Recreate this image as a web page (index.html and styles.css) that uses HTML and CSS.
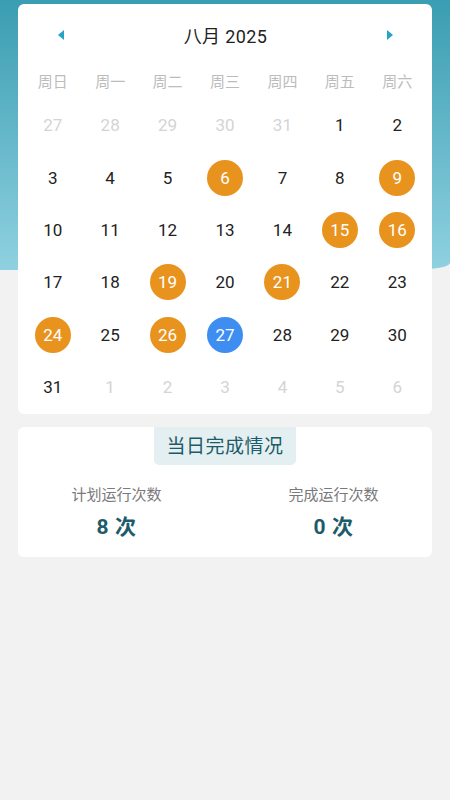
FILE: index.html
```html
<!DOCTYPE html>
<html>

<head>
    <title>运行日历</title>
    <link rel="stylesheet" href="styles.css">
</head>

<body>
    <div class="page-bg"></div>
    <div class="page">
        <div class="cal-card">
            <div class="cal-head">
                <span class="cal-arrow cal-prev"></span>
                <span class="cal-title">八月 2025</span>
                <span class="cal-arrow cal-next"></span>
            </div>
            <div class="cal-grid cal-week">
                <span>周日</span><span>周一</span><span>周二</span><span>周三</span><span>周四</span><span>周五</span><span>周六</span>
            </div>
            <div class="cal-grid cal-days">
                <span class="off">27</span><span class="off">28</span><span class="off">29</span><span class="off">30</span><span class="off">31</span><span>1</span><span>2</span>
                <span>3</span><span>4</span><span>5</span><span class="done">6</span><span>7</span><span>8</span><span class="done">9</span>
                <span>10</span><span>11</span><span>12</span><span>13</span><span>14</span><span class="done">15</span><span class="done">16</span>
                <span>17</span><span>18</span><span class="done">19</span><span>20</span><span class="done">21</span><span>22</span><span>23</span>
                <span class="done">24</span><span>25</span><span class="done">26</span><span class="today">27</span><span>28</span><span>29</span><span>30</span>
                <span>31</span><span class="off">1</span><span class="off">2</span><span class="off">3</span><span class="off">4</span><span class="off">5</span><span class="off">6</span>
            </div>
        </div>

        <div class="stat-card">
            <div class="stat-tag">当日完成情况</div>
            <div class="stat-row">
                <div class="stat-item">
                    <div class="stat-label">计划运行次数</div>
                    <div class="stat-value">8 次</div>
                </div>
                <div class="stat-item">
                    <div class="stat-label">完成运行次数</div>
                    <div class="stat-value">0 次</div>
                </div>
            </div>
        </div>
    </div>
</body>

</html>
```

FILE: styles.css
```css
html, body{
    margin: 0;
    padding: 0;
}
body{
    background-color: #f2f2f2;
    font-family: Roboto, "Noto Sans CJK SC", sans-serif;
    color: #222;
    position: relative;
    min-height: 800px;
}
.page-bg{
    position: absolute;
    left: 0;
    top: 0;
    width: 100%;
    height: 270px;
    background: linear-gradient(#3a9db1, #8fd1e1);
    border-bottom-right-radius: 40px 7px;
}
.page{
    position: relative;
    padding: 4px 18px;
}
.cal-card{
    background-color: #fff;
    border-radius: 6px;
    padding: 0 6px 1px 6px;
}
.cal-head{
    height: 62px;
    display: flex;
    align-items: center;
    justify-content: space-between;
    padding: 0 33px 2px 34px;
}
.cal-title{
    font-size: 18px;
    letter-spacing: 0.4px;
    color: #222;
}
.cal-arrow{
    width: 0;
    height: 0;
    border-top: 5px solid transparent;
    border-bottom: 5px solid transparent;
}
.cal-prev{
    border-right: 6px solid #25a3c9;
}
.cal-next{
    border-left: 6px solid #25a3c9;
}
.cal-grid{
    display: grid;
    grid-template-columns: repeat(7, 1fr);
    text-align: center;
}
.cal-week{
    height: 29px;
    line-height: 29px;
    font-size: 15px;
    color: #bcbcbc;
    margin-bottom: 2px;
}
.cal-days{
    grid-auto-rows: 52.4px;
}
.cal-days span{
    display: flex;
    align-items: center;
    justify-content: center;
    font-size: 17px;
    color: #222;
}
.cal-days span.off{
    color: #d4d4d4;
}
.cal-days span.done,
.cal-days span.today{
    width: 36px;
    height: 36px;
    border-radius: 50%;
    color: #fff;
    justify-self: center;
    align-self: center;
}
.cal-days span.done{
    background-color: #e9931f;
}
.cal-days span.today{
    background-color: #3d8ef0;
}
.stat-card{
    margin-top: 13px;
    background-color: #fff;
    border-radius: 6px;
    height: 130px;
    display: flex;
    flex-direction: column;
    align-items: center;
}
.stat-tag{
    background-color: #e3eff0;
    color: #1e5b69;
    font-size: 19px;
    padding: 2px 12px 0 12px;
    height: 36px;
    line-height: 36px;
    border-radius: 0 0 5px 5px;
    letter-spacing: 0.5px;
}
.stat-row{
    display: flex;
    justify-content: center;
    gap: 107px;
    margin-top: 19px;
}
.stat-item{
    width: 110px;
    text-align: center;
}
.stat-label{
    font-size: 15px;
    color: #7a7a7a;
    line-height: 22px;
}
.stat-value{
    font-size: 21px;
    font-weight: bold;
    color: #1e5b69;
    line-height: 28px;
    margin-top: 7px;
    letter-spacing: 0.5px;
}
```
